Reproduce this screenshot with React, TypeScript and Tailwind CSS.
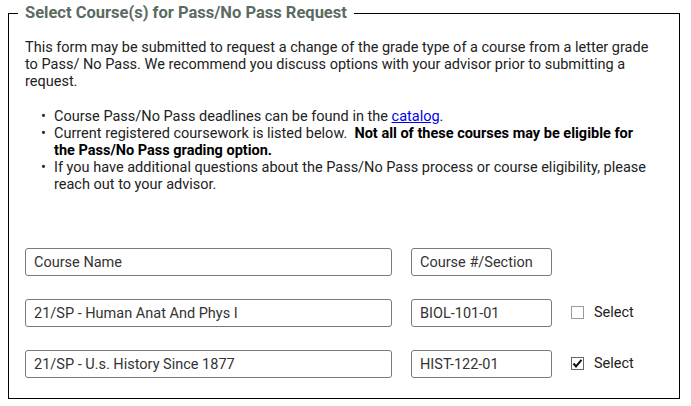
import React from "react";

function Box({ text, w }: { text: string; w: string }) {
  return (
    <div
      className={`${w} h-[28px] border border-[#7a7a7a] rounded-[3px] pl-[8px] flex items-center text-[14.5px] text-[#333] bg-white`}
    >
      {text}
    </div>
  );
}

function Check({ checked }: { checked: boolean }) {
  return (
    <div className="flex items-center gap-[10px] -mt-[2px]">
      <span
        className={`w-[13px] h-[13px] border ${checked ? "border-[#666]" : "border-[#9a9a9a]"} bg-white flex items-center justify-center`}
      >
        {checked && (
          <svg width="11" height="11" viewBox="0 0 11 11">
            <path d="M1.5 5.5 L4 8.5 L9.5 1.8" fill="none" stroke="#111" strokeWidth="2" />
          </svg>
        )}
      </span>
      <span className="text-[14.5px] text-[#222]">Select</span>
    </div>
  );
}

export default function App() {
  return (
    <div
      className="bg-white w-[691px] h-[406px] pt-[3px]"
      style={{ fontFamily: "Roboto, 'Liberation Sans', sans-serif" }}
    >
      <fieldset className="ml-[8px] w-[672px] border border-black pl-[9px] pr-[16px] pb-[20px] pt-[16px]">
        <legend className="px-[7px] text-[16.5px] leading-[20px] font-bold text-[#5b6b63]">
          Select Course(s) for Pass/No Pass Request
        </legend>
        <div className="pl-[7px] text-[14.5px] leading-[17px] text-[#222]">
          <p className="mb-[18px]">
            This form may be submitted to request a change of the grade type of a course from a letter grade
            to Pass/ No Pass. We recommend you discuss options with your advisor prior to submitting a
            request.
          </p>
          <ul className="pr-[10px]">
            <li className="flex">
              <span className="ml-[16px] w-[13px] shrink-0">•</span>
              <span>
                Course Pass/No Pass deadlines can be found in the{" "}
                <a className="text-[#0000ee] underline" href="#">
                  catalog
                </a>
                .
              </span>
            </li>
            <li className="flex">
              <span className="ml-[16px] w-[13px] shrink-0">•</span>
              <span>
                Current registered coursework is listed below.&nbsp;{" "}
                <b className="font-bold text-black">
                  Not all of these courses may be eligible for the Pass/No Pass grading option.
                </b>
              </span>
            </li>
            <li className="flex">
              <span className="ml-[16px] w-[13px] shrink-0">•</span>
              <span>
                If you have additional questions about the Pass/No Pass process or course eligibility, please
                reach out to your advisor.
              </span>
            </li>
          </ul>
          <div className="mt-[55px] flex flex-col gap-[23px]">
            <div className="flex items-center gap-[19px]">
              <Box text="Course Name" w="w-[367px]" />
              <Box text="Course #/Section" w="w-[141px]" />
            </div>
            <div className="flex items-center gap-[19px]">
              <Box text="21/SP - Human Anat And Phys I" w="w-[367px]" />
              <Box text="BIOL-101-01" w="w-[141px]" />
              <Check checked={false} />
            </div>
            <div className="flex items-center gap-[19px]">
              <Box text="21/SP - U.s. History Since 1877" w="w-[367px]" />
              <Box text="HIST-122-01" w="w-[141px]" />
              <Check checked={true} />
            </div>
          </div>
        </div>
      </fieldset>
    </div>
  );
}
